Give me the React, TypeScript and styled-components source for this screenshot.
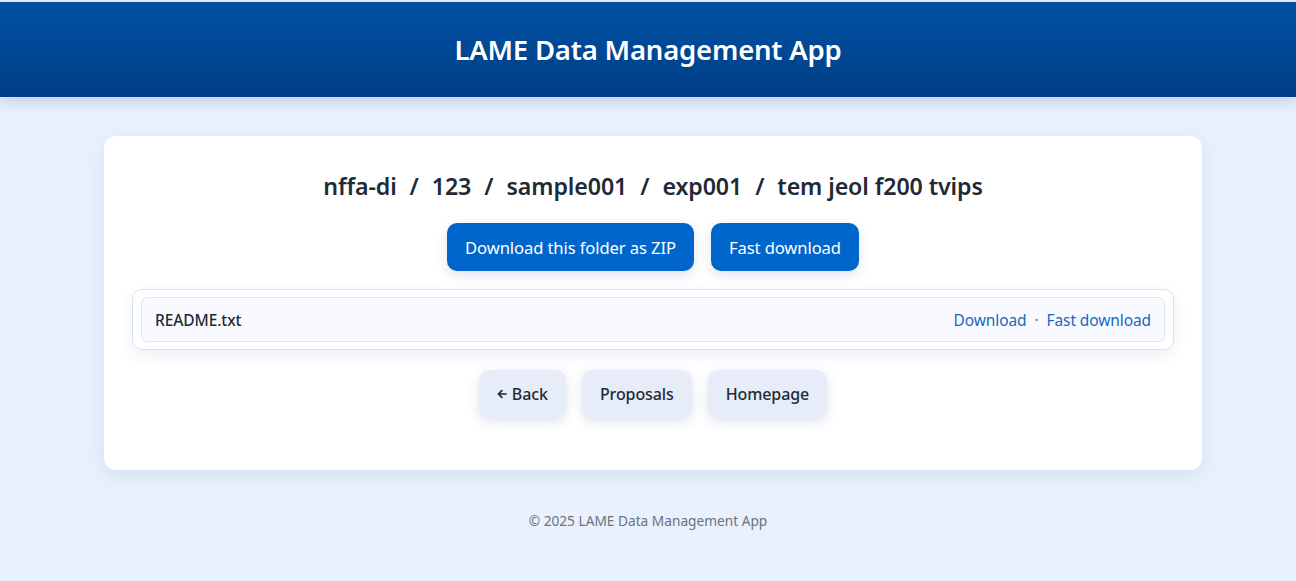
import styled, { createGlobalStyle } from "styled-components";

const GlobalStyle = createGlobalStyle`
    html, body {
        margin: 0;
        padding: 0;
        background: #e9f1fd;
        font-family: "Noto Sans", "Open Sans", sans-serif;
        color: #1f2937;
    }
`;

const Page = styled.div`
    min-height: 581px;
    display: flex;
    flex-direction: column;
    border-top: 2px solid #eef2f8;
    box-sizing: border-box;
`;

const Header = styled.header`
    height: 95px;
    background: linear-gradient(180deg, #0050a4 0%, #003f86 100%);
    display: flex;
    align-items: center;
    justify-content: center;
    box-shadow: 0 4px 14px rgba(0, 50, 120, 0.18);
`;

const Title = styled.h1`
    margin: 0;
    color: #ffffff;
    font-size: 27.5px;
    font-weight: 600;
    letter-spacing: -0.2px;
`;

const Main = styled.main`
    padding: 39px 94px 0 104px;
`;

const Card = styled.section`
    background: #ffffff;
    border-radius: 12px;
    box-shadow: 0 6px 20px rgba(30, 70, 140, 0.10);
    padding: 35px 28px 52px;
    display: flex;
    flex-direction: column;
    align-items: center;
`;

const Crumbs = styled.h2`
    margin: 0;
    font-size: 23.2px;
    line-height: 30px;
    font-weight: 600;
    color: #1f2a37;
    display: flex;
    gap: 13px;
    letter-spacing: -0.1px;
`;

const Crumb = styled.span`
    display: contents;
`;

const Row = styled.div`
    display: flex;
    gap: 17px;
    justify-content: center;
`;

const ActionRow = styled(Row)`
    margin-top: 22px;
`;

const NavRow = styled(Row)`
    margin-top: 20px;
    gap: 16px;
`;

const Button = styled.button<{ $variant?: "primary" | "soft" }>`
    height: 48px;
    padding: 0 18px;
    border: none;
    border-radius: 10px;
    display: inline-flex;
    align-items: center;
    gap: 5px;
    font-family: inherit;
    font-size: ${(p) => (p.$variant === "primary" ? "16.6px" : "16px")};
    font-weight: ${(p) => (p.$variant === "primary" ? 400 : 500)};
    letter-spacing: -0.1px;
    background: ${(p) => (p.$variant === "primary" ? "#0066cc" : "#e6edf8")};
    color: ${(p) => (p.$variant === "primary" ? "#ffffff" : "#1f2937")};
    box-shadow: 0 4px 12px rgba(20, 60, 130, 0.14);
    cursor: pointer;
`;

const FileList = styled.div`
    align-self: stretch;
    margin-top: 18px;
    border: 1px solid #d6e2f3;
    border-radius: 10px;
    padding: 7px 8px;
    box-shadow: 0 6px 16px rgba(30, 70, 140, 0.08);
`;

const FileRow = styled.div`
    height: 43px;
    display: flex;
    align-items: center;
    justify-content: space-between;
    padding: 0 13px;
    background: #f8faff;
    border: 1px solid #dbe5f3;
    border-radius: 6px;
`;

const FileName = styled.span`
    font-size: 15.5px;
    font-weight: 500;
    color: #1f2937;
    letter-spacing: -0.1px;
`;

const Links = styled.div`
    display: flex;
    gap: 8px;
    font-size: 15.5px;
    color: #1a66c2;
    letter-spacing: -0.1px;
`;

const Link = styled.a`
    color: inherit;
    text-decoration: none;
`;

const Dot = styled.span`
    color: #6b7280;
`;

const Footer = styled.footer`
    text-align: center;
    margin-top: 41px;
    font-size: 13.7px;
    color: #6b7280;
`;

const BackArrow = () => (
    <svg width="10" height="10" viewBox="0 0 10 10" fill="none" stroke="currentColor" strokeWidth="1.7" strokeLinecap="round" strokeLinejoin="round">
        <path d="M9 5H1.5M4.8 1.6L1.4 5l3.4 3.4" />
    </svg>
);

const parts = ["nffa-di", "123", "sample001", "exp001", "tem jeol f200 tvips"];

const App = () => {
    return (
        <>
            <GlobalStyle />
            <Page>
                <Header>
                    <Title>LAME Data Management App</Title>
                </Header>
                <Main>
                    <Card>
                        <Crumbs>
                            {parts.map((p, i) => (
                                <Crumb key={p}>
                                    {i > 0 && <span>/</span>}
                                    <span>{p}</span>
                                </Crumb>
                            ))}
                        </Crumbs>
                        <ActionRow>
                            <Button $variant="primary">Download this folder as ZIP</Button>
                            <Button $variant="primary">Fast download</Button>
                        </ActionRow>
                        <FileList>
                            <FileRow>
                                <FileName>README.txt</FileName>
                                <Links>
                                    <Link href="#">Download</Link>
                                    <Dot>·</Dot>
                                    <Link href="#">Fast download</Link>
                                </Links>
                            </FileRow>
                        </FileList>
                        <NavRow>
                            <Button $variant="soft"><BackArrow />Back</Button>
                            <Button $variant="soft">Proposals</Button>
                            <Button $variant="soft">Homepage</Button>
                        </NavRow>
                    </Card>
                </Main>
                <Footer>© 2025 LAME Data Management App</Footer>
            </Page>
        </>
    );
};

export default App;
